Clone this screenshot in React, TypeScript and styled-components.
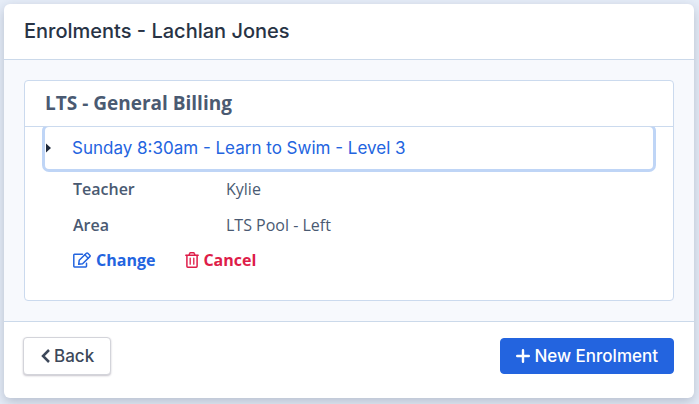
import React from 'react';
import styled, { createGlobalStyle } from 'styled-components';

const GlobalStyle = createGlobalStyle`
  *, *::before, *::after { box-sizing: border-box; }
  body {
    margin: 0;
    background: #e6edf8;
    color: #4a5a72;
    font-family: 'Open Sans', sans-serif;
    font-size: 16px;
    line-height: 24px;
  }
  button { font: inherit; cursor: pointer; }
`;

const headingFont = `'Inter', sans-serif`;

const Page = styled.main`
  padding: 4px 5px 6px 4px;
`;

const Card = styled.section`
  background: #fff;
  border-radius: 6px;
  box-shadow: 0 4px 12px rgba(30, 41, 70, 0.24);
`;

const CardHeader = styled.header`
  padding: 12px 20px 13px;
  border-bottom: 1px solid #cbd9ea;
`;

const Title = styled.h1`
  margin: 0;
  color: #283345;
  font-family: ${headingFont};
  font-size: 20px;
  font-weight: 500;
  line-height: 30px;
`;

const CardBody = styled.div`
  padding: 20px;
  background: #f7f9fd;
`;

const CardFooter = styled.footer`
  display: flex;
  align-items: center;
  justify-content: space-between;
  padding: 15px 20px 23px 19px;
  border-top: 1px solid #cbd9ea;
`;

const Panel = styled.section`
  background: #fff;
  border: 1px solid #cbdaee;
  border-radius: 4px;
`;

const PanelTitle = styled.h2`
  margin: 0;
  padding: 8px 20px 9px;
  border-bottom: 1px solid #cbdaee;
  font-size: 19px;
  font-weight: 700;
  line-height: 28px;
`;

const PanelBody = styled.div`
  padding: 0 20px 28px;
  overflow: hidden;
`;

const ClassToggle = styled.button`
  display: flex;
  align-items: center;
  gap: 20px;
  width: 100%;
  padding: 9px 0;
  border: 0;
  border-radius: 4px;
  background: #fff;
  box-shadow: 0 0 0 3px #bfd5f6;
  color: #2364df;
  text-align: left;
  && { font-family: ${headingFont}; font-size: 17px; }
`;

const Marker = styled.svg`
  width: 7px;
  height: 10px;
  fill: #1e293b;
`;

const Details = styled.dl`
  display: grid;
  grid-template-columns: 153px 1fr;
  row-gap: 12px;
  margin: 8px 0 0;
  padding-left: 28px;
`;

const Term = styled.dt`
  font-weight: 600;
`;

const Value = styled.dd`
  margin: 0;
`;

const Actions = styled.div`
  display: flex;
  gap: 30px;
  margin-top: 11px;
  padding-left: 28px;
`;

const Action = styled.button<{ $danger?: boolean }>`
  display: inline-flex;
  align-items: center;
  gap: ${({ $danger }) => ($danger ? '4px' : '5px')};
  padding: 0;
  border: 0;
  background: none;
  color: ${({ $danger }) => ($danger ? '#de1d49' : '#2364df')};
  && { font-weight: 700; }
`;

const Button = styled.button<{ $primary?: boolean }>`
  display: inline-flex;
  align-items: center;
  gap: 4px;
  padding: ${({ $primary }) => ($primary ? '5px 15px' : '6px 16px 6px 17px')};
  border: 1px solid ${({ $primary }) => ($primary ? '#2364df' : '#d3d4da')};
  border-radius: 4px;
  background: ${({ $primary }) => ($primary ? '#2364df' : '#fff')};
  box-shadow: ${({ $primary }) => ($primary ? 'none' : '0 1px 2px rgba(30, 20, 50, 0.25)')};
  color: ${({ $primary }) => ($primary ? '#fff' : '#3d485a')};
  && { font-family: ${headingFont}; font-size: 17px; font-weight: 500; }
`;

const EditIcon = () => (
  <svg width="18" height="16" viewBox="0 0 18 16" fill="none" stroke="currentColor" strokeWidth="1.5" strokeLinejoin="round" strokeLinecap="round" aria-hidden="true">
    <path d="M9.5 2.3h-8a.7.7 0 0 0-.7.7v11.3c0 .4.3.7.7.7h11.3c.4 0 .7-.3.7-.7v-3.1" />
    <path d="M6.2 8.3 13.4 1.2c.4-.4 1-.4 1.4 0l2 2c.4.4.4 1 0 1.4L9.6 11.8l-3.9.5z" />
    <path d="m11.8 2.8 3.4 3.4" strokeWidth="1.3" />
  </svg>
);

const TrashIcon = () => (
  <svg width="14" height="16" viewBox="0 0 14 16" fill="none" stroke="currentColor" strokeWidth="1.5" strokeLinejoin="round" strokeLinecap="round" aria-hidden="true">
    <path d="M.8 3.2h12.4M4 3l.8-1.8c.1-.3.4-.4.7-.4h3c.3 0 .6.1.7.4L10 3" />
    <path d="M1.9 3.4v10.9c0 .5.4.9.9.9h8.4c.5 0 .9-.4.9-.9V3.4" />
    <path d="M5.2 6.2v6M8.8 6.2v6" strokeWidth="1.3" />
  </svg>
);

const BackIcon = () => (
  <svg width="9" height="14" viewBox="0 0 9 14" fill="none" stroke="currentColor" strokeWidth="2.5" aria-hidden="true">
    <path d="M8 1 2 7l6 6" />
  </svg>
);

const PlusIcon = () => (
  <svg width="14" height="14" viewBox="0 0 14 14" fill="none" stroke="currentColor" strokeWidth="2.4" strokeLinecap="round" aria-hidden="true">
    <path d="M7 1.2v11.6M1.2 7h11.6" />
  </svg>
);

export default function App() {
  return (
    <>
      <GlobalStyle />
      <Page>
        <Card>
          <CardHeader>
            <Title>Enrolments - Lachlan Jones</Title>
          </CardHeader>
          <CardBody>
            <Panel>
              <PanelTitle>LTS - General Billing</PanelTitle>
              <PanelBody>
                <ClassToggle type="button">
                  <Marker viewBox="0 0 7 10" aria-hidden="true">
                    <path d="M1 .5 6 5 1 9.5z" />
                  </Marker>
                  Sunday 8:30am - Learn to Swim - Level 3
                </ClassToggle>
                <Details>
                  <Term>Teacher</Term>
                  <Value>Kylie</Value>
                  <Term>Area</Term>
                  <Value>LTS Pool - Left</Value>
                </Details>
                <Actions>
                  <Action type="button"><EditIcon />Change</Action>
                  <Action type="button" $danger><TrashIcon />Cancel</Action>
                </Actions>
              </PanelBody>
            </Panel>
          </CardBody>
          <CardFooter>
            <Button type="button"><BackIcon />Back</Button>
            <Button type="button" $primary><PlusIcon />New Enrolment</Button>
          </CardFooter>
        </Card>
      </Page>
    </>
  );
}
